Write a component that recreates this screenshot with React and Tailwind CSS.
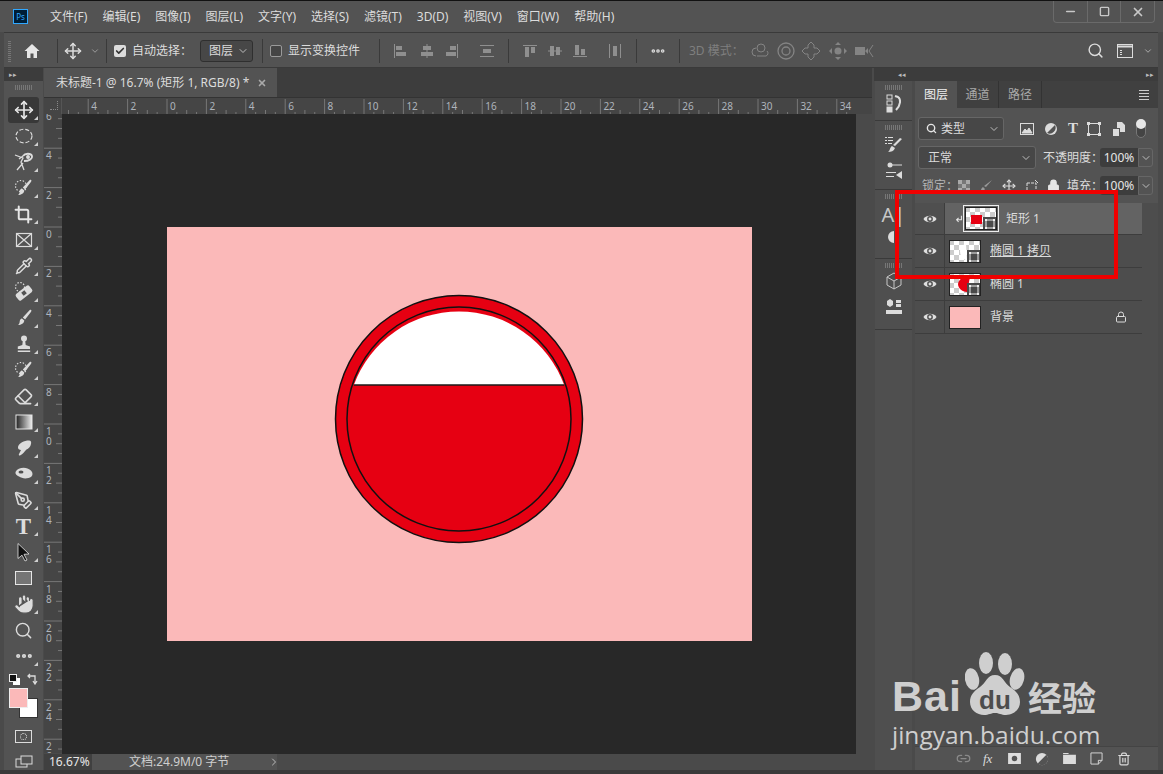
import { Move, Crop, Pipette, Eraser, PenTool, Hand, Search, Ellipsis, ChevronDown, Check, Lock, Link2, Trash2, ChevronRight, X, Minus, Square } from 'lucide-react'

const cjk = { fontFamily: '"Noto Sans", "Noto Sans CJK SC", sans-serif' }
const menus = ['文件(F)', '编辑(E)', '图像(I)', '图层(L)', '文字(Y)', '选择(S)', '滤镜(T)', '3D(D)', '视图(V)', '窗口(W)', '帮助(H)']

const Sep = ({ ml }) => <div className={`h-[24px] w-px bg-[#3a3a3a] ${ml}`} />

const Grip = () => <div className="mx-auto h-[5px] w-[17px] bg-[repeating-linear-gradient(90deg,#777_0_1px,transparent_1px_2px)]" />

const Align = ({ d, className }) => (
  <svg viewBox="0 0 16 16" className={`h-4 w-4 shrink-0 ${className}`} fill="#8f8f8f"><path d={d} /></svg>
)

const Brush = ({ dots }) => (
  <svg viewBox="0 0 20 20" className="h-5 w-5" fill="#dcdcdc">
    {dots && <circle cx="7" cy="8" r="5.5" fill="none" stroke="#dcdcdc" strokeWidth="1.2" strokeDasharray="1.4 1.6" />}
    <path d="M17 2c.6.4.6 1-.1 2l-5.800 7.500-2.300-2L15.500 2.300c.6-.5 1-.6 1.500-.3zM8 10.500l2.300 2c-.3 2.800-3 4.500-6.300 4.500 1.500-1 1.500-2.200 1.700-3.500.2-1.700 1-2.800 2.300-3z" />
  </svg>
)

const tools = [
  <Move key="a" size={20} color="#e6e6e6" strokeWidth={2} />,
  <svg key="b" viewBox="0 0 20 20" className="h-5 w-5"><ellipse cx="10" cy="10" rx="8" ry="6.800" fill="none" stroke="#dcdcdc" strokeWidth="1.200" strokeDasharray="4 2" /></svg>,
  <svg key="c" viewBox="0 0 20 20" className="h-5 w-5" fill="none" stroke="#dcdcdc" strokeWidth="1.300"><path d="M1 3l8 3-2 4 3 8M9 11l-6 7M5 7l4-3" /><path d="M9 4c2-3 8-3 9 0 .5 3-3 5-8 5" strokeWidth="1.800" /><circle cx="14" cy="5" r="1.300" fill="#dcdcdc" /></svg>,
  <Brush key="d" dots />,
  <Crop key="e" size={19} color="#e6e6e6" strokeWidth={2.500} />,
  <svg key="f" viewBox="0 0 20 20" className="h-5 w-5" fill="none" stroke="#dcdcdc" strokeWidth="1.200"><rect x="2.500" y="3.500" width="15" height="13" /><path d="M2.500 3.500l15 13M17.500 3.500l-15 13" /></svg>,
  <Pipette key="g" size={18} color="#dcdcdc" strokeWidth={2} />,
  <svg key="h" viewBox="0 0 20 20" className="h-5 w-5">
    <circle cx="6" cy="5" r="4.500" fill="none" stroke="#dcdcdc" strokeWidth="1.200" strokeDasharray="1.400 1.600" />
    <rect x="1.500" y="7" width="17" height="8" rx="2" transform="rotate(-38 10 11)" fill="#dcdcdc" />
    <rect x="8" y="9" width="4" height="4" transform="rotate(-38 10 11)" fill="#535353" />
  </svg>,
  <Brush key="i" />,
  <svg key="j" viewBox="0 0 20 20" className="h-5 w-5" fill="#dcdcdc"><circle cx="10" cy="4.500" r="3" /><path d="M8.800 7h2.400l.5 4 4.300 1.500V15H3.800v-2.500L8.300 11zM3.800 16.500h12.400V18H3.800z" /></svg>,
  <Brush key="k" dots />,
  <Eraser key="l" size={19} color="#dcdcdc" />,
  <svg key="m" viewBox="0 0 20 20" className="h-5 w-5"><defs><linearGradient id="g1"><stop offset="0" stopColor="#222" /><stop offset="1" stopColor="#eee" /></linearGradient></defs><rect x="2" y="3" width="16" height="14" fill="url(#g1)" stroke="#e6e6e6" /></svg>,
  <svg key="n" viewBox="0 0 20 20" className="h-5 w-5" fill="#dcdcdc"><path d="M4 9c1-4 6-6.500 11-6.500 2 0 2.500 1.500 2 3.500-.5 3-2.500 4.500-4.500 5.500-2 1.500-3.500 5-6.500 6-1 .3-1.500-.7-1-1.500l2-4c-1.500 0-3.500-1-3-3z" /></svg>,
  <svg key="o" viewBox="0 0 20 20" className="h-5 w-5"><path d="M1.500 8c2-4 8-5 12-3.500 3 1 5 3 5 5.500 0 2.500-2 3.500-4 4-4 1-7 0-9.500-1.500-2-1-4-2.500-3.500-4.500z" fill="#dcdcdc" /><ellipse cx="7" cy="8" rx="2.500" ry="1.500" fill="#4f4f4f" /></svg>,
  <PenTool key="p" size={19} color="#dcdcdc" />,
  <span key="q" className="text-[23px] leading-none font-bold text-[#dcdcdc]" style={{ fontFamily: '"Liberation Serif", serif' }}>T</span>,
  <svg key="r" viewBox="0 0 20 20" className="h-5 w-5"><path d="M4 1.500l11 10.500-5 .3 3 5.700-2 1-3-5.800-4 3.300z" fill="#111" stroke="#e6e6e6" strokeWidth=".8" /></svg>,
  <div key="s" className="h-[14px] w-[17px] border border-[#e6e6e6] bg-[#757575]" />,
  <Hand key="t" size={22} color="#535353" fill="#dcdcdc" strokeWidth={1.200} />,
  <Search key="u" size={19} color="#dcdcdc" strokeWidth={1.800} />,
  <Ellipsis key="v" size={20} color="#dcdcdc" strokeWidth={3} />,
]

function HRuler() {
  const ticks = []
  for (let k = -3; k < 18; k++) {
    const x = 105 + k * 39.4
    ticks.push(<path key={k} d={`M${x} 1V17`} stroke="#777" />)
    ticks.push(<text key={`t${k}`} x={x + 3} y="12" fontSize="10" fill="#aeb4bc">{Math.abs(k * 2)}</text>)
    for (let m = 1; m < 4; m++) {
      const h = m === 2 ? 12 : 14
      ticks.push(<path key={`${k}-${m}`} d={`M${x + m * 9.85} ${h}V17`} stroke="#777" />)
    }
  }
  return <svg width="794" height="17" className="block" style={cjk}>{ticks}</svg>
}

function VRuler() {
  const ticks = []
  for (let k = -3; k < 14; k++) {
    const y = 113 + k * 39.4
    const digits = String(Math.abs(k * 2)).split('')
    ticks.push(<path key={k} d={`M0 ${y}H18`} stroke="#777" />)
    digits.forEach((dg, i) => ticks.push(<text key={`t${k}${i}`} x="2" y={y + 11 + i * 10} fontSize="10" fill="#aeb4bc">{dg}</text>))
    for (let m = 1; m < 4; m++) {
      ticks.push(<path key={`${k}-${m}`} d={`M${m === 2 ? 12 : 14} ${y + m * 9.85}H18`} stroke="#777" />)
    }
  }
  return <svg width="18" height="639" className="block shrink-0 bg-[#454545]" style={cjk}>{ticks}</svg>
}

const Thumb = ({ children, pink }) => (
  <svg width="32" height="23" viewBox="0 0 32 23" className="block">
    <defs>
      <pattern id="chk" width="10" height="10" patternUnits="userSpaceOnUse">
        <rect width="10" height="10" fill="#fff" /><rect width="5" height="5" fill="#ccc" /><rect x="5" y="5" width="5" height="5" fill="#ccc" />
      </pattern>
    </defs>
    <rect width="32" height="23" fill={pink ? '#fbb9b9' : 'url(#chk)'} />
    {children}
    {!pink && (
      <g>
        <rect x="18" y="10" width="14" height="13" fill="#4a4a4a" />
        <rect x="21" y="13" width="8" height="8" fill="none" stroke="#eee" />
        <path d="M20 12h2v2h-2zM28 12h2v2h-2zM20 20h2v2h-2zM28 20h2v2h-2z" fill="#eee" />
      </g>
    )}
    <rect x=".5" y=".5" width="31" height="22" fill="none" stroke="#222" />
  </svg>
)

const EyeCell = () => (
  <div className="flex w-[30px] shrink-0 items-center justify-center border-r border-[#3d3d3d]">
    <svg viewBox="0 0 16 12" className="h-[12px] w-[14px]">
      <path d="M.5 6C3.500 1 12.500 1 15.500 6 12.500 11 3.500 11 .5 6z" fill="#e0e0e0" />
      <circle cx="8" cy="6" r="3.300" fill="#4d4d4d" />
      <circle cx="8" cy="6" r="1.700" fill="#e0e0e0" />
    </svg>
  </div>
)

const Caret = () => <ChevronDown size={12} color="#bdbdbd" />

const layerIcon = 'h-4 w-4'

export default function App() {
  return (
    <div className="relative flex h-[774px] w-[1163px] flex-col overflow-hidden border-t border-[#111] bg-[#4a4a4a] text-[12px] text-[#dcdcdc]" style={cjk}>
      {/* title bar */}
      <div className="flex h-[31px] shrink-0 items-center bg-[#535353]">
        <div className="ml-[13px] flex h-[15px] w-[15px] items-center justify-center border border-[#31a8ff] bg-[#001e36] text-[8px] leading-none text-[#31a8ff]">Ps</div>
        <div className="ml-[22px] flex gap-[15px]">
          {menus.map(m => <span key={m} className="whitespace-nowrap">{m}</span>)}
        </div>
        <div className="mb-[9px] ml-auto mr-[8px] flex h-[22px] w-[102px] items-center rounded-b border border-t-0 border-[#6a6a6a]">
          <div className="flex h-full flex-1 items-center justify-center border-r border-[#6a6a6a]"><Minus size={13} color="#c8c8c8" strokeWidth={3} /></div>
          <div className="flex h-full flex-1 items-center justify-center border-r border-[#6a6a6a]"><Square size={11} color="#c8c8c8" strokeWidth={3} /></div>
          <div className="flex h-full flex-1 items-center justify-center"><X size={14} color="#c8c8c8" strokeWidth={3} /></div>
        </div>
      </div>

      {/* options bar */}
      <div className="ml-[4px] mr-[5px] flex h-[36px] shrink-0 items-center border-y border-[#3a3a3a] bg-[#535353] pt-[1px]">
        <div className="ml-[4px] h-[22px] w-[3px] bg-[repeating-linear-gradient(0deg,#777_0_1px,transparent_1px_2px)]" />
        <svg viewBox="0 0 16 16" className="ml-[13px] h-4 w-4 shrink-0" fill="#e6e6e6"><path d="M8 1L.5 8H3v7h3.500v-4.500h3V15H13V8h2.500z" /></svg>
        <Sep ml="ml-[17px]" />
        <Move size={18} color="#dcdcdc" strokeWidth={2} className="ml-[6px] shrink-0" />
        <ChevronDown size={10} color="#aaa" className="ml-[8px] shrink-0" />
        <Sep ml="ml-[6px]" />
        <div className="ml-[7px] flex h-[12px] w-[12px] items-center justify-center rounded-[2px] bg-[#dcdcdc]"><Check size={10} color="#333" strokeWidth={4} /></div>
        <span className="ml-[6px] w-[56px] whitespace-nowrap">自动选择：</span>
        <div className="ml-[12px] flex h-[22px] w-[53px] items-center justify-between rounded-[3px] border border-[#2f2f2f] bg-[#474747] pl-[8px] pr-[3px]">图层<Caret /></div>
        <Sep ml="ml-[9px]" />
        <div className="ml-[7px] h-[12px] w-[12px] rounded-[2px] border border-[#9a9a9a] bg-[#454545]" />
        <span className="ml-[6px] w-[72px] whitespace-nowrap">显示变换控件</span>
        <Sep ml="ml-[19px]" />
        <Align className="ml-[12px]" d="M2 1h1v14H2zM4 3h6v4H4zM4 9h10v4H4z" />
        <Align className="ml-[11px]" d="M7.500 1h1v14h-1zM4 3h8v4H4zM2 9h12v4H2z" />
        <Align className="ml-[9px]" d="M13 1h1v14h-1zM6 3h6v4H6zM2 9h10v4H2z" />
        <Align className="ml-[19px]" d="M1 2h14v1H1zM1 13h14v1H1zM4 6h8v4H4z" />
        <Sep ml="ml-[13px]" />
        <Align className="ml-[13px]" d="M1 2h14v1H1zM3 4h4v10H3zM9 4h4v6H9z" />
        <Align className="ml-[9px]" d="M1 7.500h14v1H1zM3 3h4v10H3zM9 4h4v8H9z" />
        <Align className="ml-[9px]" d="M1 13h14v1H1zM3 2h4v10H3zM9 6h4v6H9z" />
        <Align className="ml-[19px]" d="M2 1h1v14H2zM13 1h1v14h-1zM6 3h4v10H6z" />
        <Sep ml="ml-[13px]" />
        <Ellipsis size={16} color="#dcdcdc" strokeWidth={3.500} className="ml-[13px] shrink-0" />
        <Sep ml="ml-[13px]" />
        <span className="ml-[9px] w-[50px] whitespace-nowrap text-[#7f7f7f]">3D 模式：</span>
        <svg viewBox="0 0 20 20" className="ml-[11px] h-5 w-5 shrink-0" fill="none" stroke="#848484"><circle cx="11" cy="7" r="4" /><path d="M6 15a4 4 0 0 1 0-8M7 15h9a3 3 0 0 0 1-5" /></svg>
        <svg viewBox="0 0 20 20" className="ml-[6px] h-5 w-5 shrink-0" fill="none" stroke="#848484" strokeWidth="1.300"><circle cx="10" cy="10" r="8" /><circle cx="10" cy="10" r="4" /></svg>
        <svg viewBox="0 0 20 20" className="ml-[5px] h-5 w-5 shrink-0" fill="none" stroke="#848484"><path d="M10 1l3 3v3l3-0 3 3-3 3h-3v3l-3 3-3-3v-3H4l-3-3 3-3h3V4z" /></svg>
        <svg viewBox="0 0 20 20" className="ml-[7px] h-5 w-5 shrink-0" fill="#848484"><path d="M10 1l3 3H7zM10 19l3-3H7zM1 10l3-3v6zM19 10l-3-3v6z" /><circle cx="10" cy="10" r="3.500" /></svg>
        <svg viewBox="0 0 20 20" className="ml-[6px] h-5 w-5 shrink-0" fill="#848484"><path d="M1 6h10v8H1zM11 10l3-3v6z" /><path d="M19 4l-4 6 4 6" fill="none" stroke="#848484" /></svg>
        <Search size={17} color="#dcdcdc" strokeWidth={2} className="ml-auto mr-[13px] shrink-0" />
        <svg viewBox="0 0 16 14" className="mr-[10px] h-[14px] w-[16px] shrink-0" fill="none" stroke="#dcdcdc"><rect x=".5" y=".5" width="15" height="13" /><path d="M.5 2.500h15" strokeWidth="2" /><path d="M3 6h2v1H3zM3 8h2v1H3zM3 10h2v1H3z" fill="#dcdcdc" stroke="none" /></svg>
        <ChevronDown size={10} color="#bbb" className="mr-[5px] shrink-0" />
      </div>

      {/* main */}
      <div className="flex min-h-0 flex-1 pl-[4px] pr-[5px]">
        {/* tools */}
        <div className="flex w-[39px] shrink-0 flex-col bg-[#535353]">
          <div className="flex h-[13px] shrink-0 items-center bg-[#3c3c3c] pl-[5px] text-[7px] leading-none text-[#bbb]">▸▸</div>
          <div className="h-[16px] shrink-0 pt-[4px]"><Grip /></div>
          {tools.map((t, i) => (
            <div key={i} className={`relative mx-[4px] flex h-[26px] shrink-0 items-center justify-center ${i === 0 ? 'rounded-[3px] bg-[#383838]' : ''}`}>
              {t}
              {i !== 18 && i !== 20 && <span className="absolute bottom-[3px] right-[1px] h-0 w-0 border-b-[4px] border-l-[4px] border-b-[#cfcfcf] border-l-transparent" />}
            </div>
          ))}
          <div className="mt-[1px] flex h-[18px] shrink-0 items-center gap-[7px] pl-[5px]">
            <svg viewBox="0 0 11 11" className="h-[11px] w-[11px]"><rect x="4" y="4" width="7" height="7" fill="#fff" /><rect x=".5" y=".5" width="7" height="7" fill="#111" stroke="#eee" /></svg>
            <svg viewBox="0 0 12 12" className="h-3 w-3" fill="none" stroke="#dcdcdc" strokeWidth="1.300"><path d="M1 3h7v7M6 8l2 3 2-3M3 1L1 3l2 2" /></svg>
          </div>
          <div className="relative h-[33px] shrink-0">
            <div className="absolute left-[15px] top-[10px] h-[20px] w-[19px] border border-[#333] bg-white" />
            <div className="absolute left-[5px] top-0 h-[20px] w-[19px] border border-[#eee] bg-[#fbb9b9]" />
          </div>
          <div className="ml-[11px] mt-[9px] flex h-[13px] w-[17px] shrink-0 items-center justify-center border border-[#dcdcdc]">
            <div className="h-[7px] w-[7px] rounded-full border border-dotted border-[#dcdcdc]" />
          </div>
          <svg viewBox="0 0 18 13" className="ml-[11px] mt-[12px] h-[13px] w-[18px] shrink-0" fill="#535353" stroke="#dcdcdc"><rect x="1" y="4" width="11" height="8" /><rect x="6" y="1" width="11" height="8" /></svg>
        </div>

        {/* document area */}
        <div className="ml-[1px] flex w-[828px] shrink-0 flex-col">
          <div className="flex h-[29px] shrink-0 bg-[#3d3d3d]">
            <div className="flex w-[233px] items-center whitespace-nowrap bg-[#535353] pl-[12px]">
              未标题-1 @ 16.7% (矩形 1, RGB/8) *
              <X size={10} color="#aaa" strokeWidth={4} className="ml-[8px]" />
            </div>
          </div>
          <div className="flex h-[17px] shrink-0 border-t border-[#333] bg-[#454545]">
            <div className="w-[18px] shrink-0 border-r border-[#555]">
              <div className="ml-[6px] mt-[3px] h-[9px] w-[8px] border-b border-r border-dotted border-[#888]" />
            </div>
            <HRuler />
          </div>
          <div className="flex min-h-0 flex-1">
            <VRuler />
            <div className="flex w-[794px] shrink-0 items-center justify-center bg-[#282828]">
              <div className="flex h-[414px] w-[585px] justify-center bg-[#fbb9b9] pt-[67px]">
                <svg width="250" height="250" viewBox="0 0 250 250" className="block">
                  <circle cx="125" cy="125" r="123.500" fill="#e60012" stroke="#111" strokeWidth="1.500" />
                  <path d="M19.800 91A112 112 0 0 1 230.200 91Z" fill="#fff" />
                  <path d="M19.800 91H230.200" stroke="#1a1a1a" strokeWidth="1.500" />
                  <circle cx="125" cy="125" r="112" fill="none" stroke="#111" strokeWidth="1.500" />
                </svg>
              </div>
            </div>
            <div className="w-[16px] shrink-0 bg-[#4a4a4a]" />
          </div>
          <div className="flex h-[16px] shrink-0 items-center bg-[#4a4a4a]">
            <div className="flex h-full w-[48px] items-center bg-[#404040] pl-[5px] text-[#e6e6e6]">16.67%</div>
            <div className="flex h-full w-[185px] items-center whitespace-nowrap bg-[#535353] pl-[37px] text-[#cfcfcf]">
              文档:24.9M/0 字节
              <ChevronRight size={12} color="#bbb" className="ml-[39px] shrink-0" />
            </div>
          </div>
        </div>

        {/* right dock */}
        <div className="ml-[2px] flex w-[284px] shrink-0 flex-col">
          <div className="flex h-[13px] shrink-0 items-center justify-between bg-[#3c3c3c] pl-[24px] pr-[4px] text-[7px] leading-none text-[#bbb]">
            <span>◂◂</span><span>▸▸</span>
          </div>
          <div className="flex min-h-0 flex-1">
            <div className="ml-[1px] flex w-[37px] shrink-0 flex-col bg-[#4f4f4f]">
              <div className="h-[40px] border-b border-[#3a3a3a] pt-[4px]">
                <Grip />
                <svg viewBox="0 0 20 20" className="mx-auto mt-[3px] h-5 w-5" fill="none" stroke="#dcdcdc"><rect x="3" y="2" width="5" height="4" /><rect x="3" y="8" width="5" height="4" /><rect x="3" y="14" width="5" height="5" fill="#dcdcdc" /><path d="M11 3l3 1c3 2 3 8-2 13" strokeWidth="2" /></svg>
              </div>
              <div className="h-[69px] border-b border-[#3a3a3a] pt-[4px]">
                <Grip />
                <svg viewBox="0 0 20 20" className="mx-auto mt-[4px] h-5 w-5" fill="#dcdcdc"><path d="M1 3h2v1H1zM1 6h2v1H1zM1 9h2v1H1zM4 3h5v1H4zM4 6h5v1H4zM4 9h4v1H4zM18 5l-7 7-2-1 7-7zM8 12l3 2c-1 3-4 4-7 4 2-1 2-5 4-6z" /></svg>
                <svg viewBox="0 0 20 20" className="mx-auto mt-[7px] h-5 w-5" fill="#dcdcdc"><circle cx="6" cy="4" r="2.500" /><path d="M8 3.500h10v1H8zM2 11h10v1H2zM2 15h8v1H2zM12 14l6-4v8z" /></svg>
              </div>
              <div className="h-[69px] border-b border-[#3a3a3a] pt-[4px]">
                <Grip />
                <div className="mt-[4px] text-center text-[20px] leading-[24px] text-[#c8c8c8]">A|</div>
                <svg viewBox="0 0 20 20" className="mx-auto mt-[1px] h-5 w-5" fill="#dcdcdc"><path d="M10 3a6 6 0 0 0 0 12zM12 1h1v18h-1z" /></svg>
              </div>
              <div className="h-[71px] border-b border-[#3a3a3a] pt-[4px]">
                <Grip />
                <svg viewBox="0 0 20 20" className="mx-auto mt-[3px] h-5 w-5" fill="none" stroke="#c8c8c8"><path d="M3 6l7-4 7 4v8l-7 4-7-4zM3 6l7 4 7-4M10 10v8" /></svg>
                <svg viewBox="0 0 20 20" className="mx-auto mt-[7px] h-5 w-5" fill="#dcdcdc"><path d="M3 3l3-2 3 2v4L6 9 3 7zM12 2h5v3h-5zM12 6h5v3h-5zM2 12h16v4H2z" /></svg>
              </div>
            </div>
            <div className="ml-[3px] flex w-[243px] shrink-0 flex-col bg-[#535353]">
              <div className="flex h-[27px] shrink-0 items-stretch bg-[#404040] text-[#a9a9a9]">
                <div className="flex w-[42px] items-center justify-center bg-[#535353] text-[#f0f0f0]">图层</div>
                <div className="flex w-[42px] items-center justify-center border-r border-[#333]">通道</div>
                <div className="flex w-[43px] items-center justify-center border-r border-[#333]">路径</div>
                <div className="ml-auto flex w-[28px] flex-col items-center justify-center gap-[2px]">
                  <div className="h-px w-[10px] bg-[#ccc]" /><div className="h-px w-[10px] bg-[#ccc]" /><div className="h-px w-[10px] bg-[#ccc]" /><div className="h-px w-[10px] bg-[#ccc]" />
                </div>
              </div>
              <div className="mt-[9px] flex h-[23px] shrink-0 items-center">
                <div className="ml-[3px] flex h-full w-[86px] items-center rounded-[3px] border border-[#666] bg-[#474747] pl-[7px] pr-[3px]">
                  <Search size={11} color="#e6e6e6" strokeWidth={3} /><span className="ml-[4px] flex-1">类型</span><Caret />
                </div>
                <svg viewBox="0 0 16 16" className={`ml-[15px] ${layerIcon}`} fill="none" stroke="#dcdcdc"><rect x="1.500" y="2.500" width="13" height="11" /><path d="M3 12l3-4 2 2 2-3 3 5z" fill="#dcdcdc" /></svg>
                <svg viewBox="0 0 16 16" className={`ml-[8px] ${layerIcon}`}><circle cx="8" cy="8" r="6" fill="#dcdcdc" /><path d="M12 4A6 6 0 0 1 4 12z" fill="#535353" /></svg>
                <span className="ml-[9px] text-[15px] font-bold leading-none" style={{ fontFamily: '"Liberation Serif", serif' }}>T</span>
                <svg viewBox="0 0 16 16" className={`ml-[8px] ${layerIcon}`} fill="none" stroke="#dcdcdc"><rect x="2.500" y="2.500" width="11" height="11" /><path d="M1 1h3v3H1zM12 1h3v3h-3zM1 12h3v3H1zM12 12h3v3h-3z" fill="#dcdcdc" stroke="none" /></svg>
                <svg viewBox="0 0 16 16" className={`ml-[9px] ${layerIcon}`} fill="#dcdcdc"><path d="M6 1h5l3 3v7H9V7H6z" /><path d="M2 8h6v7H2z" /></svg>
                <div className="relative ml-[9px] h-[19px] w-[10px] rounded-full border border-[#777] bg-[#444]">
                  <div className="absolute -left-px -top-px h-[10px] w-[10px] rounded-full bg-[#e6e6e6]" />
                </div>
              </div>
              <div className="mt-[6px] flex h-[23px] shrink-0 items-center">
                <div className="ml-[3px] flex h-full w-[118px] items-center justify-between rounded-[3px] border border-[#666] bg-[#474747] pl-[9px] pr-[3px]">正常<Caret /></div>
                <span className="ml-[7px] w-[57px] whitespace-nowrap">不透明度：</span>
                <div className="flex h-[19px] w-[38px] items-center justify-center rounded-l-[3px] bg-[#3d3d3d] text-[#e6e6e6]">100%</div>
                <div className="flex h-[19px] w-[15px] items-center justify-center rounded-r-[3px] border border-[#666]"><Caret /></div>
              </div>
              <div className="mt-[3px] flex h-[31px] shrink-0 items-center pb-[4px]">
                <span className="ml-[7px] w-[34px] whitespace-nowrap text-[#b5b5b5]">锁定：</span>
                <svg viewBox="0 0 12 12" className="ml-[2px] h-3 w-3"><rect width="12" height="12" fill="#777" /><path d="M0 0h4v4H0zM8 0h4v4H8zM4 4h4v4H4zM0 8h4v4H0zM8 8h4v4H8z" fill="#aaa" /></svg>
                <svg viewBox="0 0 14 14" className="ml-[9px] h-[14px] w-[14px]" fill="#999"><path d="M13 1L7 8 5 7zM4 8l2 2c-1 2-3 3-5 3 1-1 1-4 3-5z" /></svg>
                <Move size={14} color="#dcdcdc" className="ml-[9px]" />
                <svg viewBox="0 0 14 14" className="ml-[9px] h-[14px] w-[14px]" fill="none" stroke="#dcdcdc"><path d="M2 4h9v9M2 4v9h9" strokeDasharray="3 1" /><path d="M10 1l3 3" /></svg>
                <Lock size={13} color="#e6e6e6" fill="#e6e6e6" className="ml-[8px]" />
                <span className="ml-[7px] w-[33px] whitespace-nowrap">填充：</span>
                <div className="flex h-[19px] w-[38px] items-center justify-center rounded-l-[3px] bg-[#3d3d3d] text-[#e6e6e6]">100%</div>
                <div className="flex h-[19px] w-[15px] items-center justify-center rounded-r-[3px] border border-[#666]"><Caret /></div>
              </div>

              <div className="flex min-h-0 flex-1 flex-col bg-[#4d4d4d]">
                <div className="flex h-[32px] w-[227px] border-b border-[#3d3d3d] bg-[#4f4f4f]">
                  <EyeCell />
                  <div className="flex flex-1 items-center bg-[#636363] pl-[10px]">
                    <svg viewBox="0 0 10 10" className="mr-[2px] h-[8px] w-[8px]" fill="none" stroke="#e6e6e6" strokeWidth="1.300"><path d="M8 1v5H2M4.500 3.500L2 6l2.500 2.500" /></svg>
                    <div className="outline outline-1 outline-offset-1 outline-[#eee]"><Thumb><rect x="6" y="8" width="11" height="9" fill="#e60012" /></Thumb></div>
                    <span className="ml-[9px]">矩形 1</span>
                  </div>
                </div>
                <div className="flex h-[33px] w-[227px] border-b border-[#3d3d3d]">
                  <EyeCell />
                  <div className="flex flex-1 items-center pl-[4px]">
                    <Thumb><path d="M17 4a7 7 0 0 0-6 7c0 5 3 9 7 9z" fill="#fff" /></Thumb>
                    <span className="ml-[9px] underline">椭圆 1 拷贝</span>
                  </div>
                </div>
                <div className="flex h-[33px] w-[227px] border-b border-[#3d3d3d]">
                  <EyeCell />
                  <div className="flex flex-1 items-center pl-[4px]">
                    <Thumb><path d="M21 4a9 9 0 0 0-12 7c0 4 4 8 9 8z" fill="#e60012" /></Thumb>
                    <span className="ml-[9px]">椭圆 1</span>
                  </div>
                </div>
                <div className="flex h-[33px] w-[227px] border-b border-[#3d3d3d]">
                  <EyeCell />
                  <div className="flex flex-1 items-center pl-[4px]">
                    <Thumb pink />
                    <span className="ml-[9px]">背景</span>
                    <Lock size={12} color="#dcdcdc" className="ml-auto mr-[15px]" />
                  </div>
                </div>
              </div>

              <div className="flex h-[24px] shrink-0 items-center border-t border-[#444] pl-[41px]">
                <Link2 size={15} color="#8a8a8a" />
                <span className="ml-[12px] w-[14px] text-[13px] italic" style={{ fontFamily: '"Liberation Serif", serif' }}>fx</span>
                <svg viewBox="0 0 14 12" className="ml-[11px] h-[11px] w-[13px]"><rect width="14" height="12" fill="#dcdcdc" /><circle cx="7" cy="6" r="3" fill="#535353" /></svg>
                <svg viewBox="0 0 16 16" className="ml-[14px] h-[14px] w-[14px]"><circle cx="8" cy="8" r="7" fill="#dcdcdc" /><path d="M13 3A7 7 0 0 1 3 13z" fill="#535353" /></svg>
                <svg viewBox="0 0 14 12" className="ml-[14px] h-[11px] w-[13px]" fill="#dcdcdc"><path d="M0 0h6v1H0zM0 2h14v10H0z" /></svg>
                <svg viewBox="0 0 14 14" className="ml-[14px] h-[13px] w-[13px]" fill="none" stroke="#dcdcdc"><path d="M1 1h12v8l-4 4H1z" /><path d="M9 13V9h4" /></svg>
                <Trash2 size={14} color="#dcdcdc" className="ml-[14px]" />
              </div>
            </div>
          </div>
        </div>
      </div>
      <div className="h-[4px] shrink-0 bg-[#3a3a3a]" />

      {/* red annotation */}
      <div className="absolute left-[895px] top-[189px] h-[89px] w-[223px] border-[4px] border-[#f00000]" />

      {/* baidu watermark */}
      <div className="pointer-events-none absolute left-[890px] top-[650px] h-[110px] w-[215px] text-[#cfcfcf]">
        <svg width="80" height="70" viewBox="0 0 80 70" className="absolute left-[75px] top-0" fill="#cfcfcf">
          <ellipse cx="21" cy="12" rx="7" ry="11" />
          <ellipse cx="40" cy="13" rx="7" ry="11" />
          <ellipse cx="7" cy="28" rx="7" ry="11" transform="rotate(-12 7 28)" />
          <ellipse cx="52" cy="28" rx="7" ry="11" transform="rotate(15 52 28)" />
          <path d="M30 24c8 0 9 8 15 12 6 4 10 8 10 15 0 8-7 13-14 13-5 0-7-2-11-2s-6 2-11 2C12 64 5 59 5 51c0-7 4-11 10-15 6-4 7-12 15-12z" />
        </svg>
        <span className="absolute left-[2px] top-[24px] text-[43px] font-bold leading-none tracking-[1px]" style={{ fontFamily: '"Liberation Sans", sans-serif' }}>Bai</span>
        <span className="absolute left-[89px] top-[36px] text-[26px] font-bold leading-none text-[#4d4d4d]" style={{ fontFamily: '"Liberation Sans", sans-serif' }}>du</span>
        <span className="absolute left-[138px] top-[29px] text-[34px] font-bold leading-none" style={{ fontFamily: '"Noto Sans CJK SC", sans-serif' }}>经验</span>
        <span className="absolute left-[2px] top-[72px] whitespace-nowrap text-[24.5px] leading-none" style={{ fontFamily: '"Open Sans", sans-serif' }}>jingyan.baidu.com</span>
      </div>
    </div>
  )
}
